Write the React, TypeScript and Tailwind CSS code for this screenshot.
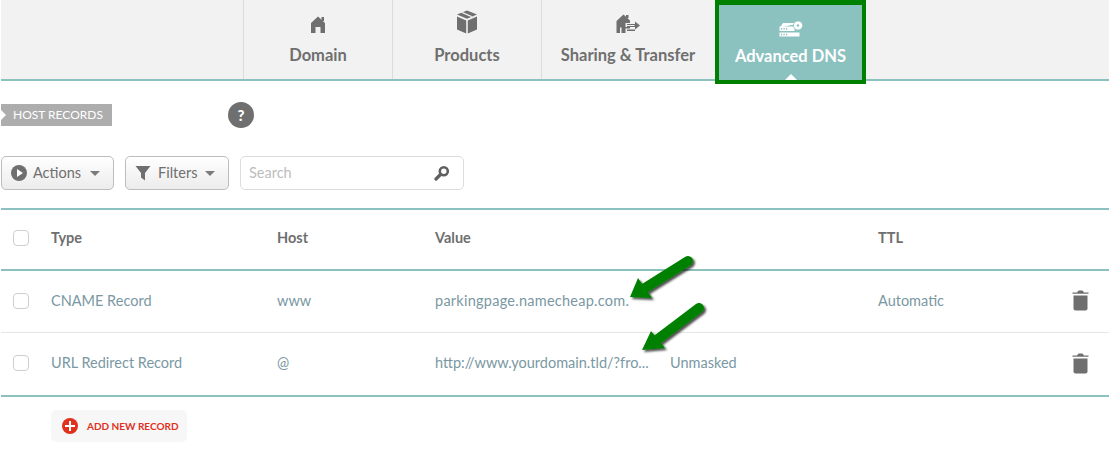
import React from 'react';

const font = { fontFamily: 'Lato, "Open Sans", sans-serif' };

function HomeIcon() {
  return (
    <svg width="18" height="18" viewBox="0 0 18 18" fill="#6f6f6f">
      <path d="M9 0.5 L16 7 V17 H11.5 V11 H6.5 V17 H2 V7 Z" />
      <rect x="12.5" y="1" width="2.5" height="4" />
    </svg>
  );
}

function BoxIcon() {
  return (
    <svg width="22" height="24" viewBox="0 0 22 24" fill="#6f6f6f">
      <path d="M11 0.5 L21 4.5 L11 8.8 L1 4.5 Z" />
      <path d="M1 6.5 L10.2 10.4 V23.5 L1 19.5 Z" />
      <path d="M21 6.5 L11.8 10.4 V23.5 L21 19.5 Z" />
      <path d="M6.5 2 L16.5 6.3 L15 7 L5 2.7 Z" fill="#f2f2f2" />
    </svg>
  );
}

function ShareIcon() {
  return (
    <svg width="26" height="20" viewBox="0 0 26 20" fill="#6f6f6f">
      <path d="M8.5 0.5 L15 6.5 V9 H10.5 V13 H15 V14.5 H10.5 V19 H6.5 V13.5 H5 V19 H1.5 V7 Z" />
      <rect x="11" y="1" width="2.5" height="3" />
      <path d="M12 10 H20 V7.5 L25 11.5 L20 15.5 V13 H12 V12 H19.5 V11 H12 Z" />
      <rect x="12" y="15.5" width="8" height="1.5" />
    </svg>
  );
}

function ServerIcon() {
  return (
    <svg width="24" height="17" viewBox="0 0 24 17" fill="#ffffff">
      <path d="M4 3 H15 V4.5 L1 7.5 Z" />
      <path d="M0.5 6.5 H15.5 V11 H0.5 Z" />
      <rect x="0.5" y="12.5" width="20" height="4" />
      <circle cx="19" cy="5.5" r="4.6" stroke="#8bc1bf" strokeWidth="0.8" />
      <circle cx="19" cy="5.5" r="1.2" fill="#8bc1bf" />
      <g fill="#8bc1bf">
        <rect x="2" y="8" width="1.2" height="1.6" />
        <rect x="4.5" y="8" width="1.2" height="1.6" />
        <rect x="7" y="8" width="1.2" height="1.6" />
        <rect x="2" y="13.7" width="1.2" height="1.6" />
        <rect x="4.5" y="13.7" width="1.2" height="1.6" />
        <rect x="7" y="13.7" width="1.2" height="1.6" />
      </g>
    </svg>
  );
}

function TrashIcon() {
  return (
    <svg width="17" height="21" viewBox="0 0 17 21" fill="#6f6f6f">
      <path d="M5.5 2 Q5.5 0.5 7 0.5 H10 Q11.5 0.5 11.5 2 L12 2.5 H16.5 V3.8 H0.5 V2.5 H5 Z" />
      <path d="M1.5 5.5 H15.5 V18.5 Q15.5 20.5 13.5 20.5 H3.5 Q1.5 20.5 1.5 18.5 Z" />
    </svg>
  );
}

function Arrow({ className, head, shaft }: { className: string; head: string; shaft: string }) {
  return (
    <svg className={className} width="76" height="62" viewBox="0 0 76 62">
      <defs>
        <filter id="arrowShadow" x="-20%" y="-20%" width="150%" height="150%">
          <feDropShadow dx="2" dy="2" stdDeviation="1.3" floodColor="#000" floodOpacity="0.7" />
        </filter>
      </defs>
      <g filter="url(#arrowShadow)">
        <path d={shaft} fill="none" stroke="#058005" strokeWidth="10" strokeLinecap="round" />
        <path d={head} fill="#058005" />
      </g>
    </svg>
  );
}

function Tab({ icon, label, className }: { icon: React.ReactNode; label: string; className: string }) {
  return (
    <div className={`flex h-[79px] flex-col items-center border-l border-[#dcdcdc] ${className}`}>
      <div className="flex h-[45px] items-end pb-[11px]">{icon}</div>
      <div className="text-[16.5px] font-bold leading-5 text-[#6f6f6f]">{label}</div>
    </div>
  );
}

function Checkbox() {
  return <div className="h-4 w-4 rounded-[4px] border border-[#cfcfcf] bg-white" />;
}

const rowClass = 'grid grid-cols-[50px_226px_158px_443px_194px_1fr] items-center';

export default function App() {
  return (
    <div className="relative h-[452px] w-[1112px] overflow-hidden bg-white" style={font}>
      <div className="ml-px w-[1108px]">
        {/* tabs */}
        <div className="flex h-[81px] border-b-2 border-[#8bc1bf] bg-[#f2f2f2] pl-[242px]">
          <Tab icon={<HomeIcon />} label="Domain" className="w-[149px]" />
          <Tab icon={<BoxIcon />} label="Products" className="w-[149px]" />
          <Tab icon={<ShareIcon />} label="Sharing & Transfer" className="w-[173px]" />
          <div className="relative z-10 ml-px flex h-[84px] w-[151px] flex-col items-center border-[4px] border-t-[5px] border-[#008000] bg-[#8bc1bf]">
            <div className="flex h-[41px] items-end pb-[9px]"><ServerIcon /></div>
            <div className="text-[16.5px] font-bold leading-5 text-white">Advanced DNS</div>
            <div className="mt-auto h-0 w-0 border-x-[6px] border-b-[6px] border-x-transparent border-b-white" />
          </div>
        </div>

        {/* title */}
        <div className="mt-[21px] flex h-[26px] items-center">
          <div className="relative flex h-[22px] w-[111px] items-center bg-[#adadad] pl-3 text-[12px] text-white">
            <span className="absolute left-0 top-[6px] h-0 w-0 border-y-[5px] border-l-[5px] border-y-transparent border-l-white" />
            HOST RECORDS
          </div>
          <div className="ml-[116px] flex h-[26px] w-[26px] items-center justify-center rounded-full bg-[#6f6f6f] text-[15px] font-black text-white">?</div>
        </div>

        {/* toolbar */}
        <div className="mt-[28px] flex h-[34px] items-center gap-[11px]">
          <button className="flex h-[34px] w-[113px] items-center rounded-[5px] border border-[#bdbdbd] bg-gradient-to-b from-white to-[#ececec] pl-[9px] text-[14.5px] text-[#6f6f6f]">
            <span className="flex h-4 w-4 items-center justify-center rounded-full bg-[#6f6f6f]">
              <span className="ml-px h-0 w-0 border-y-[4px] border-l-[6px] border-y-transparent border-l-white" />
            </span>
            <span className="ml-[6px]">Actions</span>
            <span className="ml-[9px] h-0 w-0 border-x-[5px] border-t-[5px] border-x-transparent border-t-[#7a7a7a]" />
          </button>
          <button className="flex h-[34px] w-[104px] items-center rounded-[5px] border border-[#bdbdbd] bg-gradient-to-b from-white to-[#ececec] pl-[9px] text-[14.5px] text-[#6f6f6f]">
            <svg width="16" height="16" viewBox="0 0 16 16" fill="#6f6f6f">
              <path d="M0.5 1 H15.5 L10 8 V15.5 L6 12.5 V8 Z" />
            </svg>
            <span className="ml-[7px]">Filters</span>
            <span className="ml-[8px] h-0 w-0 border-x-[5px] border-t-[5px] border-x-transparent border-t-[#7a7a7a]" />
          </button>
          <div className="flex h-[34px] w-[224px] items-center justify-between rounded-[5px] border border-[#dcdcdc] bg-white pl-2 pr-[13px] text-[14.5px] text-[#bdbdbd]">
            <span>Search</span>
            <svg width="16" height="16" viewBox="0 0 16 16" fill="none" stroke="#5f5f5f">
              <circle cx="9.8" cy="6.2" r="4" strokeWidth="2.6" />
              <path d="M6.5 9.5 L2 14" strokeWidth="3.2" strokeLinecap="round" />
            </svg>
          </div>
        </div>

        {/* table */}
        <div className="mt-[18px] text-[14.5px] text-[#7a98a3]">
          <div className={`${rowClass} h-[63px] border-y-2 border-[#8bc1bf] pb-[3px] font-bold text-[#6f6f6f]`}>
            <div className="pl-3"><Checkbox /></div>
            <div>Type</div>
            <div>Host</div>
            <div>Value</div>
            <div>TTL</div>
            <div />
          </div>
          <div className={`${rowClass} h-[62px] border-b border-[#e6e6e6] pb-[2px]`}>
            <div className="pl-3"><Checkbox /></div>
            <div>CNAME Record</div>
            <div>www</div>
            <div className="tracking-[0.25px]">parkingpage.namecheap.com.</div>
            <div>Automatic</div>
            <div><TrashIcon /></div>
          </div>
          <div className={`${rowClass} h-[64px] border-b-2 border-[#8bc1bf] pb-[2px]`}>
            <div className="pl-3"><Checkbox /></div>
            <div>URL Redirect Record</div>
            <div>@</div>
            <div className="flex">
              <span className="w-[235px] whitespace-nowrap">http://www.yourdomain.tld/?fro...</span>
              <span>Unmasked</span>
            </div>
            <div />
            <div><TrashIcon /></div>
          </div>
        </div>

        {/* add record */}
        <div className="ml-[50px] mt-[13px] flex h-8 w-[136px] items-center rounded-[5px] bg-[#f7f7f7] pl-[11px] text-[10px] font-bold text-[#e0301e]">
          <span className="relative h-4 w-4 rounded-full bg-[#e0301e]">
            <span className="absolute left-[3px] top-[7px] h-[2px] w-[10px] bg-white" />
            <span className="absolute left-[7px] top-[3px] h-[10px] w-[2px] bg-white" />
          </span>
          <span className="ml-[9px]">ADD NEW RECORD</span>
        </div>
      </div>

      {/* annotation arrows */}
      <Arrow
        className="absolute left-[625px] top-[250px]"
        head="M5 47 L13 28 L27 48 Z"
        shaft="M20 38 L63 11"
      />
      <Arrow
        className="absolute left-[638px] top-[298px]"
        head="M4 52 L13 33 L27 50 Z"
        shaft="M20 41 L61 10"
      />
    </div>
  );
}
